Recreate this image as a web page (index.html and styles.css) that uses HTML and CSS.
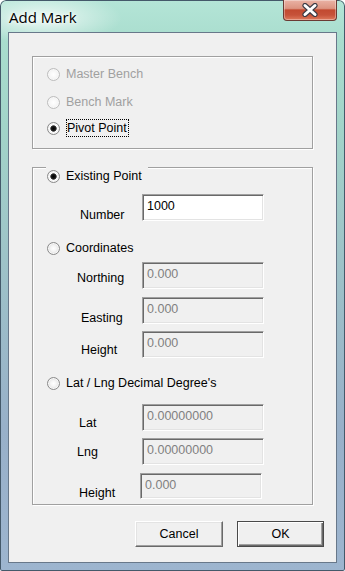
FILE: index.html
```html
<!DOCTYPE html>
<html lang="en">
<head>
    <meta charset="UTF-8">
    <meta name="viewport" content="width=device-width, initial-scale=1.0">
    <title>Add Mark</title>
    <link rel="stylesheet" href="styles.css">
</head>
<body>
    <div class="window">
        <div class="titlebar">
            <span class="title">Add Mark</span>
            <button class="close" title="Close">
                <svg width="18" height="14" viewBox="0 0 18 14">
                    <path d="M4 2.5 L14 11.5 M14 2.5 L4 11.5" stroke="#3b3b45" stroke-width="5.2" stroke-linecap="round"/>
                    <path d="M4 2.5 L14 11.5 M14 2.5 L4 11.5" stroke="#ffffff" stroke-width="3" stroke-linecap="round"/>
                </svg>
            </button>
        </div>

        <div class="client">
            <div class="group group-type">
                <label class="radio disabled"><span class="dot"></span><span class="text">Master Bench</span></label>
                <label class="radio disabled row-2"><span class="dot"></span><span class="text">Bench Mark</span></label>
                <label class="radio checked row-3"><span class="dot"></span><span class="text focused">Pivot Point</span></label>
            </div>

            <div class="group group-point">
                <label class="radio checked legend"><span class="dot"></span><span class="text">Existing Point</span></label>
                <div class="field f-number">
                    <span class="lbl lbl-number">Number</span>
                    <input class="box" type="text" value="1000">
                </div>

                <label class="radio option opt-coords"><span class="dot"></span><span class="text">Coordinates</span></label>
                <div class="field f-northing">
                    <span class="lbl lbl-northing">Northing</span>
                    <input class="box" type="text" value="0.000" disabled>
                </div>
                <div class="field f-easting">
                    <span class="lbl lbl-easting">Easting</span>
                    <input class="box" type="text" value="0.000" disabled>
                </div>
                <div class="field f-height">
                    <span class="lbl lbl-height">Height</span>
                    <input class="box" type="text" value="0.000" disabled>
                </div>

                <label class="radio option opt-latlng"><span class="dot"></span><span class="text">Lat / Lng Decimal Degree's</span></label>
                <div class="field f-lat">
                    <span class="lbl lbl-lat">Lat</span>
                    <input class="box" type="text" value="0.00000000" disabled>
                </div>
                <div class="field f-lng">
                    <span class="lbl lbl-lng">Lng</span>
                    <input class="box" type="text" value="0.00000000" disabled>
                </div>
                <div class="field f-height2">
                    <span class="lbl lbl-height2">Height</span>
                    <input class="box short" type="text" value="0.000" disabled>
                </div>
            </div>

            <div class="actions">
                <button class="btn btn-cancel">Cancel</button>
                <button class="btn btn-ok">OK</button>
            </div>
        </div>
    </div>
</body>
</html>
```

FILE: styles.css
```css
html, body {
    margin: 0;
    padding: 0;
    background: #ffffff;
}
body {
    font-family: "Liberation Sans", Arial, sans-serif;
    font-size: 12.5px;
    color: #000;
}
.window {
    width: 345px;
    height: 571px;
    box-sizing: border-box;
    display: flex;
    flex-direction: column;
    border-radius: 6px 6px 2px 2px;
    background:
        radial-gradient(ellipse 80px 26px at 42px 18px, rgba(255,255,255,0.75), rgba(255,255,255,0)),
        linear-gradient(180deg, #b4e5d7 0%, #a9ddce 7%, #a2d4c9 22%, #9ec3c8 45%, #98b0c9 75%, #9db5cf 100%);
    box-shadow: inset 0 0 0 1px #44596a;
}

/* title bar */
.titlebar {
    height: 32px;
    flex: none;
    display: flex;
    justify-content: space-between;
    align-items: flex-start;
    padding-left: 9px;
}
.title {
    font-family: "Open Sans", "Noto Sans", sans-serif;
    font-size: 15px;
    line-height: 20px;
    padding-top: 7px;
    color: #000;
    text-shadow: 0 0 6px #fff, 0 0 3px #fff;
}
.close {
    width: 54px;
    height: 21px;
    margin-right: 8px;
    padding: 0;
    border: 1px solid #6a3a33;
    border-top: none;
    border-radius: 0 0 4px 4px;
    background: linear-gradient(180deg, #eab3a5 0%, #dc9481 42%, #c24a30 50%, #c65239 75%, #de7a5c 100%);
    box-shadow: inset 0 0 0 1px rgba(255,255,255,0.35);
    display: flex;
    align-items: center;
    justify-content: center;
}
.close svg {
    display: block;
}

/* client area */
.client {
    flex: 1;
    margin: 0 8px 8px;
    border: 1px solid #68788a;
    background: #f0f0f0;
    padding: 23px 23px 0;
}

.group {
    box-sizing: border-box;
    border: 1px solid #a0a0a0;
    box-shadow: 1px 1px 0 #fff, inset 1px 1px 0 #fff;
}
.group-type {
    height: 93px;
    padding: 8px 0 0 14px;
}
.group-point {
    height: 338px;
    margin-top: 18px;
}

/* radio buttons */
.radio {
    display: flex;
    align-items: center;
    gap: 6px;
    height: 18px;
}
.radio .dot {
    width: 13px;
    height: 13px;
    box-sizing: border-box;
    border-radius: 50%;
    border: 1px solid #8a8a8a;
    background: radial-gradient(circle at 50% 50%, #ffffff 0, #f4f4f4 3px, #dadada 6px);
    box-shadow: inset 0 0 0 1px #f8f8f8;
    flex: none;
}
.radio.checked .dot {
    background: radial-gradient(circle at 50% 50%, #000 0, #151515 2px, #3a3a3a 2.8px, #fff 3.6px, #f0f0f0 4.5px, #d6d6d6 6px);
}
.radio.disabled .dot {
    border-color: #bdbdbd;
    background: radial-gradient(circle at 50% 50%, #ffffff 0, #f6f6f6 4px, #e6e6e6 6px);
}
.radio .text {
    border: 1px dotted transparent;
    border-left: none;
    line-height: 16px;
    white-space: nowrap;
}
.radio.disabled .text {
    color: #a0a0a0;
}
.radio .text.focused {
    border: 1px dotted #000;
    padding-right: 1px;
}
.row-2 {
    margin-top: 10px;
}
.row-3 {
    margin-top: 8px;
}

.legend {
    height: 22px;
    width: 102px;
    box-sizing: border-box;
    margin: -3px 0 0 13px;
    padding-left: 1px;
    background: #f0f0f0;
}
.option {
    height: 22px;
    padding-left: 14px;
}
.opt-coords {
    margin-top: 16px;
}
.opt-latlng {
    margin-top: 14px;
}

/* label + textbox rows */
.field {
    display: flex;
    height: 27px;
}
.lbl {
    width: 109px;
    box-sizing: border-box;
    line-height: 14px;
    white-space: nowrap;
}
.box {
    width: 122px;
    height: 27px;
    box-sizing: border-box;
    margin: 0;
    padding: 4px 4px 7px;
    border: 1px solid;
    border-color: #a0a0a0 #ffffff #ffffff #a0a0a0;
    box-shadow: inset 1px 1px 0 #696969, inset -1px -1px 0 #e3e3e3;
    background: #fff;
    font-family: "Liberation Sans", Arial, sans-serif;
    font-size: 12.5px;
    line-height: 14px;
    color: #000;
    outline: none;
}
.box:disabled {
    background: #f0f0f0;
    color: #808080;
    -webkit-text-fill-color: #808080;
}
.box.short {
    height: 26px;
    padding-bottom: 6px;
}

.f-number { margin-top: 7px; }
.f-northing { margin-top: 3px; }
.f-easting { margin-top: 8px; }
.f-height { margin-top: 7px; }
.f-lat { margin-top: 10px; }
.f-lng { margin-top: 7px; }
.f-height2 { margin-top: 8px; height: 26px; }

.lbl-number { padding: 14px 0 0 47px; }
.lbl-northing { padding: 9px 0 0 44px; }
.lbl-easting { padding: 14px 0 0 48px; }
.lbl-height { padding: 12px 0 0 48px; }
.lbl-lat { padding: 12px 0 0 46px; }
.lbl-lng { padding: 7px 0 0 44px; }
.lbl-height2 { padding: 13px 0 0 46px; width: 107px; }

/* dialog buttons */
.actions {
    display: flex;
    justify-content: flex-end;
    gap: 14px;
    margin-top: 16px;
    margin-right: -11px;
}
.btn {
    height: 26px;
    box-sizing: border-box;
    padding: 0;
    font-family: "Liberation Sans", Arial, sans-serif;
    font-size: 12.5px;
    color: #000;
    background: #f0f0f0;
    border: 1px solid;
    border-color: #ffffff #696969 #696969 #ffffff;
    box-shadow: inset -1px -1px 0 #a0a0a0, inset 1px 1px 0 #e3e3e3;
}
.btn-cancel {
    width: 88px;
}
.btn-ok {
    width: 87px;
    border: 1px solid #4a4a4a;
    box-shadow: inset 1px 1px 0 #ffffff, inset -1px -1px 0 #696969, inset -2px -2px 0 #a0a0a0;
}
```
